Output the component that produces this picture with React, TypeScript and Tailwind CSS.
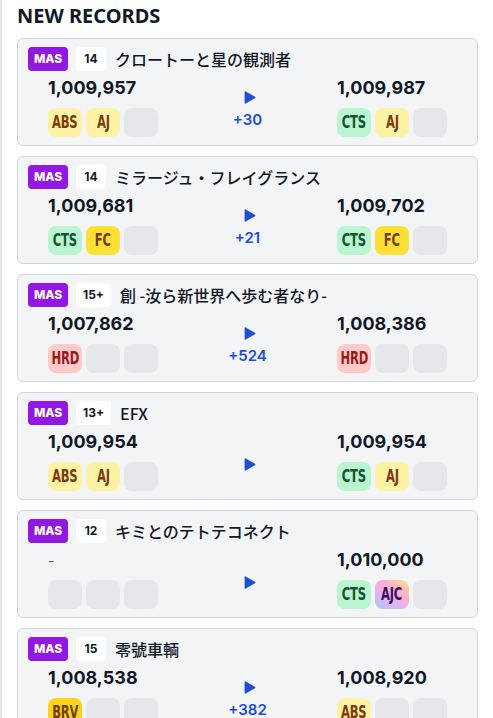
import React from 'react';

type Lamp = 'ABS' | 'AJ' | 'CTS' | 'FC' | 'HRD' | 'BRV' | 'AJC' | null;

type RecordRow = {
  level: string;
  title: string;
  before: string | null;
  beforeLamps: Lamp[];
  after: string;
  afterLamps: Lamp[];
  delta: string | null;
};

const records: RecordRow[] = [
  { level: '14', title: 'クロートーと星の観測者', before: '1,009,957', beforeLamps: ['ABS', 'AJ', null], after: '1,009,987', afterLamps: ['CTS', 'AJ', null], delta: '+30' },
  { level: '14', title: 'ミラージュ・フレイグランス', before: '1,009,681', beforeLamps: ['CTS', 'FC', null], after: '1,009,702', afterLamps: ['CTS', 'FC', null], delta: '+21' },
  { level: '15+', title: '創 -汝ら新世界へ歩む者なり-', before: '1,007,862', beforeLamps: ['HRD', null, null], after: '1,008,386', afterLamps: ['HRD', null, null], delta: '+524' },
  { level: '13+', title: 'EFX', before: '1,009,954', beforeLamps: ['ABS', 'AJ', null], after: '1,009,954', afterLamps: ['CTS', 'AJ', null], delta: null },
  { level: '12', title: 'キミとのテトテコネクト', before: null, beforeLamps: [null, null, null], after: '1,010,000', afterLamps: ['CTS', 'AJC', null], delta: null },
  { level: '15', title: '零號車輌', before: '1,008,538', beforeLamps: ['BRV', null, null], after: '1,008,920', afterLamps: ['ABS', null, null], delta: '+382' },
];

const lampStyle: Record<string, string> = {
  ABS: 'bg-[#fef3a4] text-[#7c3a0e]',
  AJ: 'bg-[#fef3a4] text-[#7c3a0e]',
  CTS: 'bg-[#b9f5cf] text-[#14532d]',
  FC: 'bg-[#fde033] text-[#713f12]',
  HRD: 'bg-[#fecaca] text-[#991b1b]',
  BRV: 'bg-[#fcd31a] text-[#713f12]',
  AJC: 'bg-[linear-gradient(35deg,#a5c8fd_0%,#e9b0f5_40%,#fdb0c8_65%,#fde68a_100%)] text-[#3b0f5f]',
};

const LampBadge = ({ lamp }: { lamp: Lamp }) => (
  <div
    className={`flex h-[29px] w-[34px] items-center justify-center rounded-lg ${lamp ? lampStyle[lamp] : 'bg-[#e5e7eb]'}`}
  >
    {lamp && (
      <span className="inline-block scale-x-[0.68] text-[17px] font-bold tracking-[-0.3px] font-['DejaVu_Sans',sans-serif]">
        {lamp}
      </span>
    )}
  </div>
);

const ScoreBlock = ({ score, lamps }: { score: string | null; lamps: Lamp[] }) => (
  <div className="w-[110px]">
    <div className="h-6 text-[18px] font-bold leading-6 text-[#111827] font-['Inter',sans-serif]">
      {score ?? <span className="text-[14px] font-normal text-gray-600">-</span>}
    </div>
    <div className="mt-2 flex gap-1">
      {lamps.map((l, i) => (
        <LampBadge key={i} lamp={l} />
      ))}
    </div>
  </div>
);

const RecordCard = ({ r }: { r: RecordRow }) => (
  <div className="rounded-md border border-[#d1d5db] bg-[#f3f4f6] px-[10px] pt-2 pb-2">
    <div className="flex h-6 items-center">
      <span className="flex h-6 w-10 items-center justify-center rounded-[4px] bg-[#9317e2] text-[12px] font-extrabold text-white font-['Inter',sans-serif]">
        MAS
      </span>
      <span className="ml-2 flex h-6 min-w-[30px] items-center justify-center rounded-[4px] bg-white px-[7px] text-[12px] font-bold text-[#111827] font-['Inter',sans-serif]">
        {r.level}
      </span>
      <span className="ml-[9px] text-[16px] font-medium text-[#111827] font-['Noto_Sans_CJK_JP','Noto_Sans',sans-serif]">
        {r.title}
      </span>
    </div>
    <div className="mt-[5px] flex px-5">
      <ScoreBlock score={r.before} lamps={r.beforeLamps} />
      <div className="flex flex-1 flex-col items-center justify-center pt-2">
        <svg width="13" height="13" viewBox="0 0 12 12" className="ml-1">
          <path d="M1.5 1 Q1.5 0 2.5 0.5 L11 5.3 Q12 6 11 6.7 L2.5 11.5 Q1.5 12 1.5 11 Z" fill="#1d4ed8" />
        </svg>
        {r.delta && (
          <span className="mt-[6px] text-[15px] font-semibold leading-5 text-[#1d4ed8] font-['Inter',sans-serif]">{r.delta}</span>
        )}
      </div>
      <ScoreBlock score={r.after} lamps={r.afterLamps} />
    </div>
  </div>
);

export default function App() {
  return (
    <div className="min-h-screen border-l-2 border-[#e5e7eb] bg-white pt-0.5 pl-[15px] pr-[15px] pb-4">
      <h2 className="h-7 text-[20px] font-bold leading-7 text-[#111827] font-['Noto_Sans',sans-serif]">NEW RECORDS</h2>
      <div className="mt-2 flex flex-col gap-[10px]">
        {records.map((r, i) => (
          <RecordCard key={i} r={r} />
        ))}
      </div>
    </div>
  );
}
